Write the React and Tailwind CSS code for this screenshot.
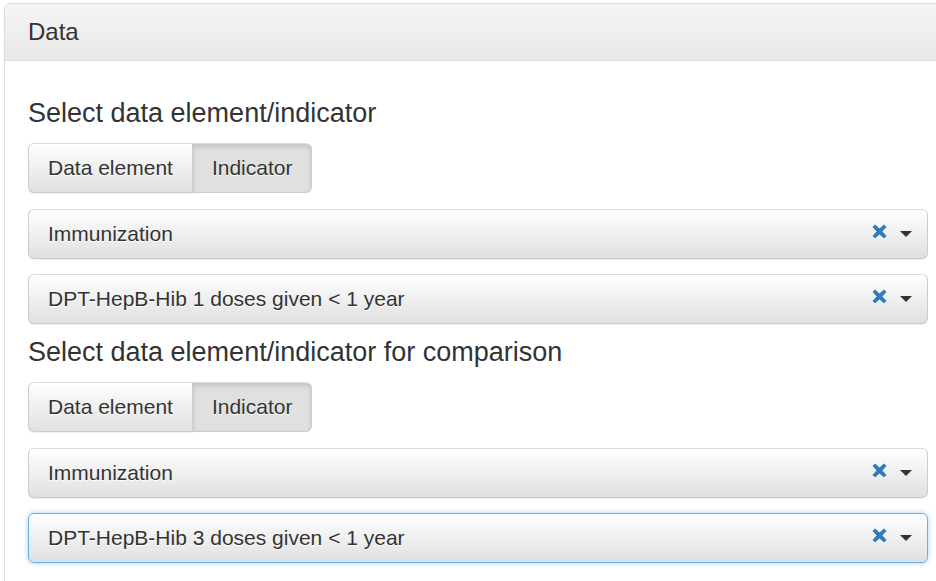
const ELEMENT_SETS = [
  {
    title: "Select data element/indicator",
    group: "Immunization",
    item: "DPT-HepB-Hib 1 doses given < 1 year",
  },
  {
    title: "Select data element/indicator for comparison",
    group: "Immunization",
    item: "DPT-HepB-Hib 3 doses given < 1 year",
    focused: true,
  },
];

function RemoveIcon() {
  return (
    <svg
      width="15"
      height="15"
      viewBox="0 0 15 15"
      className="drop-shadow-[0_1px_0_#fff]"
      aria-hidden
    >
      <path
        d="M3 0.5 L7.5 4.6 L12 0.5 L14.5 3 L10.4 7.5 L14.5 12 L12 14.5 L7.5 10.4 L3 14.5 L0.5 12 L4.6 7.5 L0.5 3 Z"
        fill="#337ab7"
      />
    </svg>
  );
}

function Caret() {
  return (
    <svg width="12" height="6" viewBox="0 0 12 6" aria-hidden>
      <path d="M0 0 H12 L6 6 Z" fill="#333" />
    </svg>
  );
}

function ToggleGroup() {
  return (
    <div className="flex h-[50px]">
      <button className="flex items-center rounded-l-[6px] border border-[#ccc] border-t-[#dbdbdb] bg-gradient-to-b from-white to-[#e0e0e0] px-[19px] text-[21px] text-[#333] shadow-[0_1px_1px_rgba(0,0,0,0.075)] [text-shadow:0_1px_0_#fff]">
        Data element
      </button>
      <button className="-ml-px flex items-center rounded-r-[6px] border border-[#ccc] border-t-[#dbdbdb] bg-[#e0e0e0] px-[19px] text-[21px] text-[#333] shadow-[inset_0_3px_5px_rgba(0,0,0,0.125)] [text-shadow:0_1px_0_#fff]">
        Indicator
      </button>
    </div>
  );
}

function Picker({ label, focused }) {
  return (
    <div
      className={`flex h-[50px] items-center rounded-[6px] border bg-gradient-to-b from-white to-[#e0e0e0] pl-[19px] pr-[15px] text-[21px] text-[#333] [text-shadow:0_1px_0_#fff] ${
        focused
          ? "border-[#66afe9] shadow-[0_0_5px_rgba(102,175,233,0.6)]"
          : "border-[#ccc] border-t-[#dbdbdb] shadow-[0_1px_1px_rgba(0,0,0,0.075)]"
      }`}
    >
      <span className="flex-1">{label}</span>
      <span className="mb-[5px] mr-[13px] flex">
        <RemoveIcon />
      </span>
      <Caret />
    </div>
  );
}

export default function App() {
  return (
    <div className="h-[581px] w-[936px] overflow-hidden bg-white font-['Liberation_Sans',Arial,sans-serif] text-[#333]">
      <div className="ml-[4px] mt-[3px] w-[948px] rounded-[6px] border border-[#ddd] shadow-[0_1px_2px_rgba(0,0,0,0.05)]">
        <div className="rounded-t-[5px] border-b border-[#ddd] bg-gradient-to-b from-[#f5f5f5] to-[#e8e8e8] px-[23px] py-[15px]">
          <h3 className="text-[24px] leading-[26px]">Data</h3>
        </div>
        <div className="px-[23px] pb-[22px] pt-[37px]">
          {ELEMENT_SETS.map((set, i) => (
            <section key={set.title} className={i > 0 ? "mt-[13px]" : ""}>
              <h4 className="text-[27px] leading-[30px]">{set.title}</h4>
              <div className={i > 0 ? "mt-[15px]" : "mt-[15px]"}>
                <ToggleGroup />
              </div>
              <div className={`flex flex-col gap-[15px] ${i > 0 ? "mt-[16px]" : "mt-[16px]"}`}>
                <Picker label={set.group} />
                <Picker label={set.item} focused={set.focused} />
              </div>
            </section>
          ))}
        </div>
      </div>
    </div>
  );
}
